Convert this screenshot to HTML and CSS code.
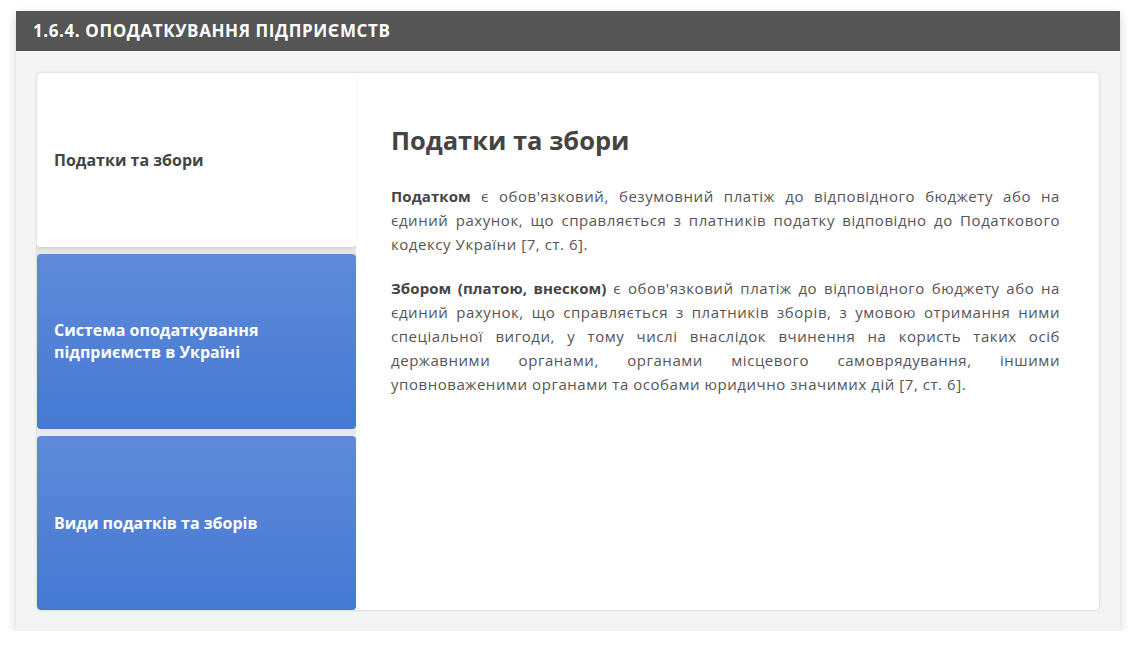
FILE: index.html
```html
<!DOCTYPE html>
<html lang="uk">
<head>
<meta charset="utf-8">
<link rel="stylesheet" href="styles.css">
</head>
<body>
<div class="panel">
  <div class="panel-head">1.6.4. ОПОДАТКУВАННЯ ПІДПРИЄМСТВ</div>
  <div class="panel-body">
    <div class="card">
      <div class="tabs">
        <div class="tab active">Податки та збори</div>
        <div class="tab">Система оподаткування підприємств в Україні</div>
        <div class="tab">Види податків та зборів</div>
      </div>
      <div class="content">
        <h2 class="title">Податки та збори</h2>
        <p class="para"><b>Податком</b> є обов'язковий, безумовний платіж до відповідного бюджету або на єдиний рахунок, що справляється з платників податку відповідно до Податкового кодексу України [7, ст. 6].</p>
        <p class="para"><b>Збором (платою, внеском)</b> є обов'язковий платіж до відповідного бюджету або на єдиний рахунок, що справляється з платників зборів, з умовою отримання ними спеціальної вигоди, у тому числі внаслідок вчинення на користь таких осіб державними органами, органами місцевого самоврядування, іншими уповноваженими органами та особами юридично значимих дій [7, ст. 6].</p>
      </div>
    </div>
  </div>
</div>
</body>
</html>
```

FILE: styles.css
```css
html, body {
  margin: 0;
  padding: 0;
  background: #ffffff;
}
body {
  padding: 11px 16px 0 16px;
  font-family: "Open Sans", "Noto Sans", sans-serif;
}
.panel {
  width: 1104px;
  background: #f4f4f4;
  box-shadow: 0 3px 10px rgba(0,0,0,0.18);
}
.panel-head {
  height: 40px;
  background: #555555;
  color: #ffffff;
  font-weight: 700;
  font-size: 17px;
  letter-spacing: 0.6px;
  line-height: 40px;
  padding-left: 17px;
  box-sizing: border-box;
}
.panel-body {
  padding: 21px 20px 20px 20px;
}
.card {
  display: flex;
  height: 539px;
  background: #ffffff;
  border: 1px solid #e4e4e4;
  border-radius: 4px;
  box-sizing: border-box;
  box-shadow: 0 0 3px rgba(0,0,0,0.06);
  overflow: hidden;
}
.tabs {
  width: 319px;
  flex: none;
  display: flex;
  flex-direction: column;
  gap: 7px;
  background: linear-gradient(#e3e3e3, #ececec);
}
.tab {
  flex: 1;
  display: flex;
  align-items: center;
  padding: 0 17px;
  border-radius: 4px;
  background: linear-gradient(#5f8ad9, #4579d3);
  color: #ffffff;
  font-weight: 700;
  font-size: 16px;
  line-height: 22px;
}
.tab.active {
  background: #ffffff;
  color: #444444;
  border-radius: 4px 0 4px 4px;
  box-shadow: 0 2px 3px rgba(0,0,0,0.08);
}
.content {
  flex: 1;
  padding: 47px 39px 0 35px;
  color: #555555;
}
.title {
  margin: 0 0 24px 0;
  font-size: 25.5px;
  line-height: 40px;
  font-weight: 700;
  color: #444444;
}
.para {
  margin: 0 0 20px 0;
  font-size: 15px;
  letter-spacing: 0.55px;
  line-height: 24px;
  text-align: justify;
}
.para b {
  color: #444444;
  letter-spacing: 0.1px;
}
```
